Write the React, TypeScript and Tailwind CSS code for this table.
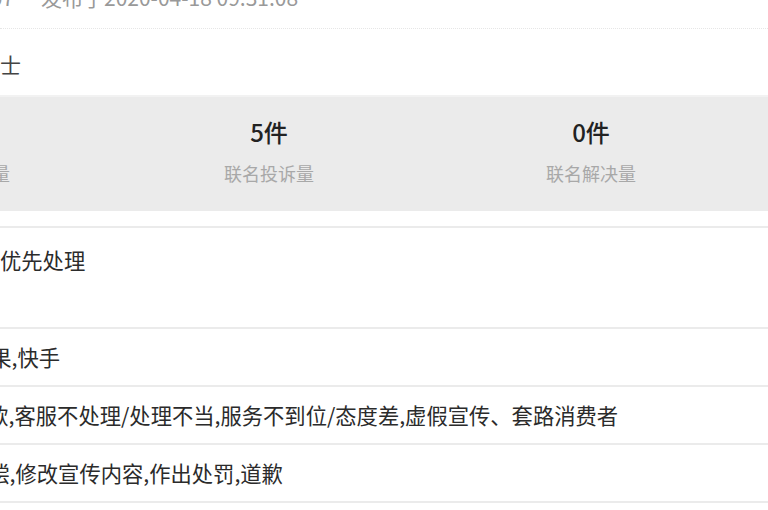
import React from "react";

const Sep = () => <div className="h-[2px] bg-[#ebebeb] shrink-0" />;

function Stat({ value, label }: { value: string; label: string }) {
  return (
    <div className="flex flex-col items-center">
      <div className="text-[24px] leading-[30px] font-medium text-[#222] whitespace-nowrap">{value}</div>
      <div className="mt-[14.5px] text-[18px] leading-[24px] text-[#a8a8a8] whitespace-nowrap">{label}</div>
    </div>
  );
}

function Row({ text, shift }: { text: string; shift: string }) {
  return (
    <div className="h-[56px] flex items-center text-[21.3px] leading-[28px] text-[#2b2b2b]">
      <span className={`whitespace-nowrap ${shift}`}>{text}</span>
    </div>
  );
}

export default function App() {
  return (
    <div className="w-[768px] h-[510px] overflow-hidden bg-white font-['Noto_Sans_CJK_SC','Noto_Sans',sans-serif] flex flex-col">
      <div className="-mt-[17px] h-[46px] shrink-0 border-b border-dotted border-[#e6e6e6] flex text-[21px] leading-[28px] text-[#999]">
        <span className="-ml-[200px] w-[214px] shrink-0 text-right whitespace-nowrap">17348762907</span>
        <span className="ml-[27px] whitespace-nowrap">发布于2020-04-18 09:31:08</span>
      </div>
      <div className="mt-[21px] flex text-[21px] leading-[28px] text-[#444] shrink-0">
        <span className="-ml-[21px] whitespace-nowrap">女士</span>
      </div>
      <div className="mt-[17px] h-[116px] shrink-0 bg-[#ebebeb] border-t-2 border-[#f2f2f2] overflow-hidden">
        <div className="-ml-[178px] w-[930px] grid grid-cols-[286px_322px_322px] pt-[19.5px]">
          <Stat value="5件" label="累计投诉量" />
          <Stat value="5件" label="联名投诉量" />
          <Stat value="0件" label="联名解决量" />
        </div>
      </div>
      <div className="mt-[15px]" />
      <Sep />
      <div className="h-[99px] shrink-0 pt-[18px] text-[21.3px] leading-[28px] text-[#2b2b2b]">
        <span className="whitespace-nowrap">优先处理</span>
      </div>
      <Sep />
      <Row text="苹果,快手" shift="-ml-[31px]" />
      <Sep />
      <Row text="退款,客服不处理/处理不当,服务不到位/态度差,虚假宣传、套路消费者" shift="-ml-[34px]" />
      <Sep />
      <Row text="赔偿,修改宣传内容,作出处罚,道歉" shift="-ml-[33px]" />
      <Sep />
    </div>
  );
}
